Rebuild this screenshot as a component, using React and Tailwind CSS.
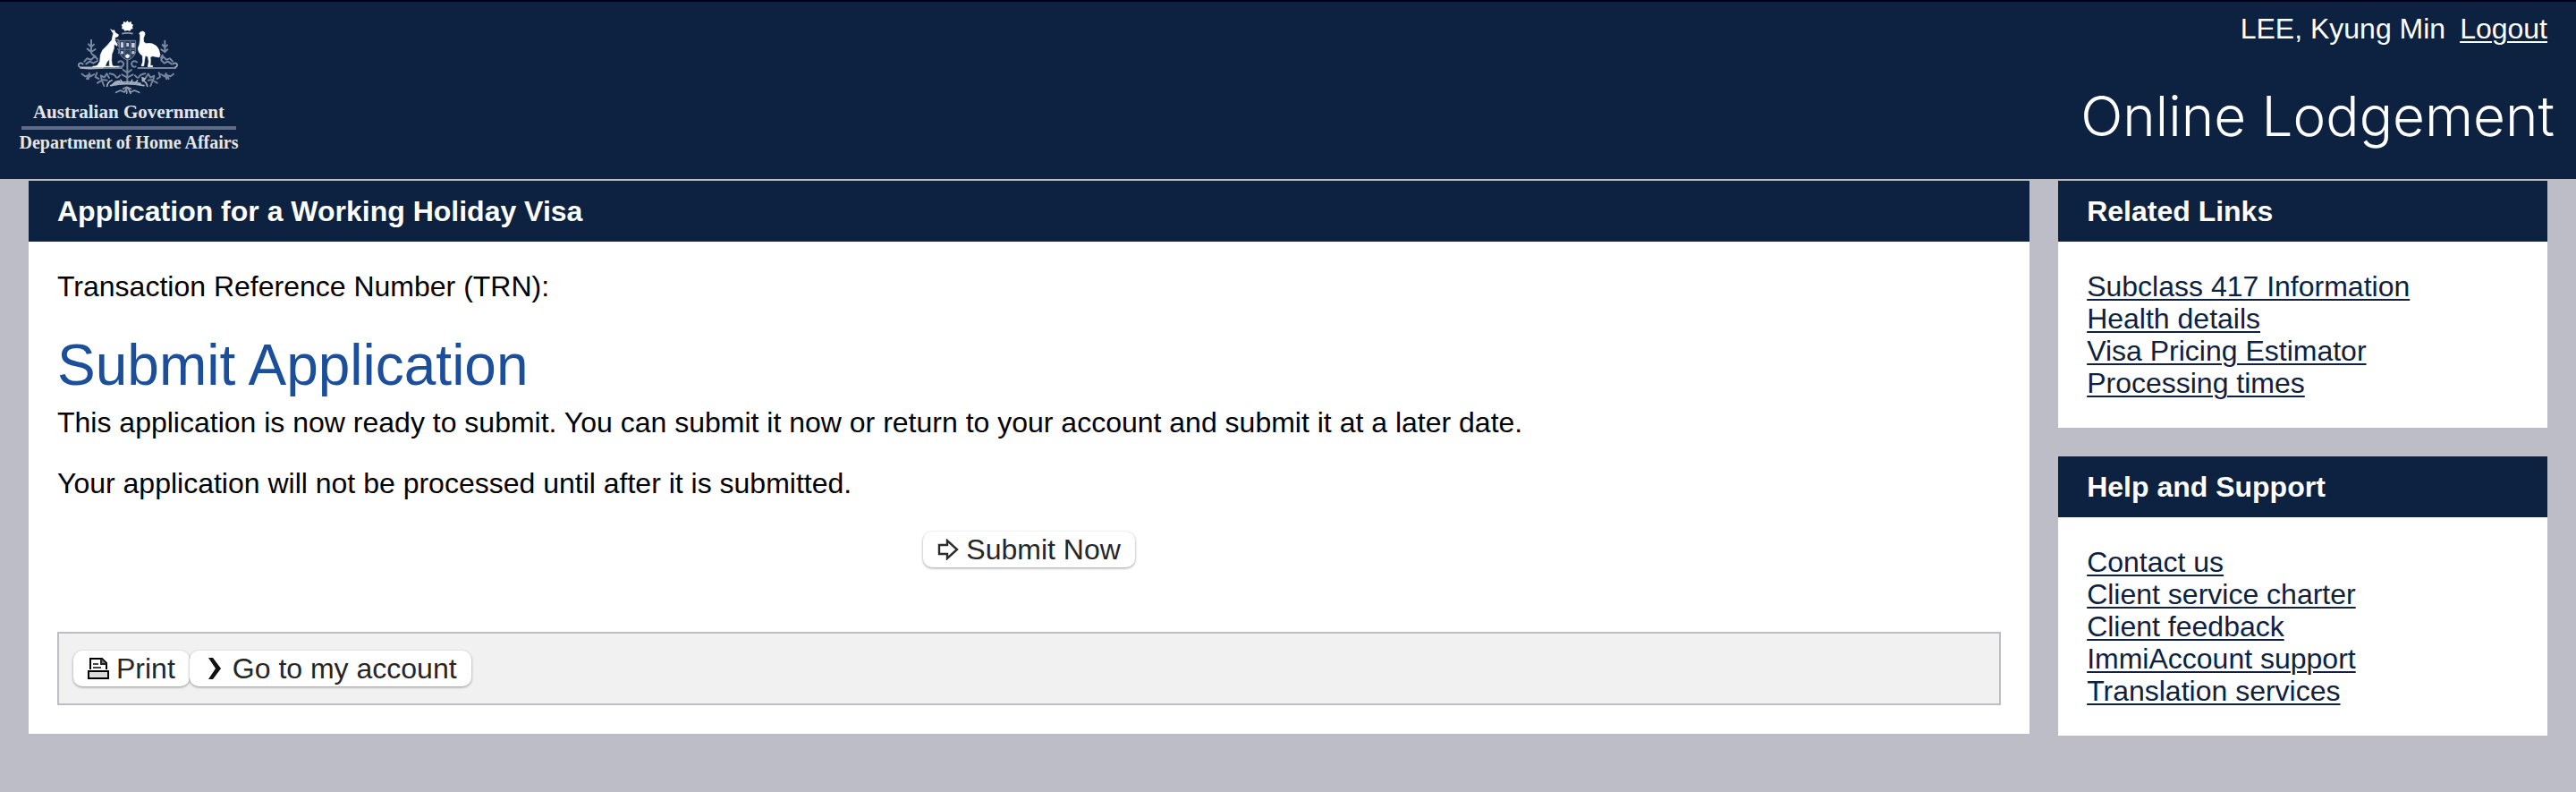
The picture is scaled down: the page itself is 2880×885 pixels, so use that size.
import React from "react";

const relatedLinks = [
  "Subclass 417 Information",
  "Health details",
  "Visa Pricing Estimator",
  "Processing times",
];

const supportLinks = [
  "Contact us",
  "Client service charter",
  "Client feedback",
  "ImmiAccount support",
  "Translation services",
];

const CoatOfArms = () => (
  <svg viewBox="0 0 390 285" className="w-[130px] h-[95px]" fill="none" aria-hidden="true">
    {/* star and wreath */}
    <path
      d="M190 27l5 6 8-3 1 8 6 3-3 6 2 7-7 2-3 6-9-2-9 2-3-6-7-2 2-7-3-6 6-3 1-8 8 3z"
      fill="#fff"
    />
    <path d="M172 71q18-5 37 0" stroke="#8f99ad" strokeWidth="5" />
    {/* shield */}
    <path
      d="M163 94h55v38q-4 20-27 28q-24-8-28-28z"
      fill="#2c3f5c"
      stroke="#76829a"
      strokeWidth="3"
    />
    <path d="M182 94v60M200 94v60M163 124h55" stroke="#5c6a85" strokeWidth="3" />
    <g fill="#c8cedb">
      <path d="M168 100h9v18h-9zM187 102h8v12h-8zM204 102h11v16h-11z" />
      <path d="M168 130h9v9h-9zM205 130h9v9h-9z" />
      <path d="M184 143l7-4 7 4-2 8-6 3-6-4z" fill="#fff" />
    </g>
    {/* kangaroo */}
    <path
      d="M134 56l7 5 5-2 4 9 10 6-1 6-10 3 0 11 8 14-2 4-9-7-1 16-7 19-1 20 2 17 9 6h-12l-6-6 0-20-8 8-6 14-8 8-44 2-28-2-3-4 42 0 14-5 9-14 2-22 7-16 17-17 14-17 5-22z"
      fill="#fff"
      stroke="#fff"
      strokeWidth="2"
    />
    {/* emu */}
    <path
      d="M230 70q4-7 12-7q8 2 7 10l-5 13 1 13 8 5q20-4 34 8q10 9 13 30l-3 8-22-4-8 3 1 12-1 17h8v4h-16l3-18-3-16-9-3-3 20-2 14h-8l5-14-1-20q-14-9-15-25l5-14 2-16 0-15z"
      fill="#fff"
      stroke="#fff"
      strokeWidth="2"
    />
    {/* wattle on both sides */}
    <g stroke="#7b88a1" strokeWidth="6" strokeLinecap="round" strokeLinejoin="round">
      <path d="M69 92v44M60 106l9 10 9-9M56 122l13 10 14-9M72 140l12 8" />
      <path d="M316 95v38M308 108l8 9 8-8M304 124l12 8 9-8M308 143l-5 9" />
      <path d="M46 164l9-10 14 4 11-10 10 8M52 172l12-8 12 6 14-8" />
      <path d="M342 164l-9-10-12 4-11-10-6 10M338 172l-12-8-12 6-10-10" />
      <path d="M154 92q10-4 4 9q9 5 2 12M158 122q8 6 2 14" strokeWidth="4" />
    </g>
    {/* base scroll */}
    <g stroke="#98a2b5" strokeWidth="5" strokeLinecap="round" strokeLinejoin="round">
      <path d="M34 184q-9-2-7-11q7-8 14 0M32 186h140" />
      <path d="M350 184q9-2 7-11q-7-8-14 0M352 186H226" />
      <path d="M75 181h88" stroke="#fff" strokeWidth="4" />
    </g>
    {/* foliage under the shield */}
    <g stroke="#76839c" strokeWidth="6" strokeLinecap="round" strokeLinejoin="round">
      <path d="M160 166q12-8 18 5q-2 14-14 10M222 166q-14-8-18 5q2 14 14 10" />
      <path d="M190 160v78M176 192l14 10 14-10M172 208l18 10 19-10" />
      <path d="M38 206l10 8 12-4-6 12M62 204l5 10 12-7M62 214l-3 9M88 202l-5 14 11 6" />
      <path d="M345 206l-10 8-12-4 6 12M320 204l-5 10-12-7M319 214l3 9M296 202l4 14-10 6" />
      <path d="M90 236l15-9-4-16 12 6 8-12 8 14M112 246l-6-15M106 225l16 2" />
      <path d="M290 236l-14-8 4-16-12 6-8-12-9 14M268 246l6-15M276 225l-16 2" />
      <path d="M131 205q16 2 20 10t14-4M250 205q-16 2-20 10t-14-4" />
    </g>
    <g stroke="#a7b0c1" strokeWidth="5" strokeLinecap="round" strokeLinejoin="round">
      <path d="M122 247q2-15 16-20M138 244q12-14 26-14M146 238q45-10 88 0" />
      <path d="M134 245q54-12 112 0M257 247q-2-15-16-20" />
      <path d="M150 232l8 8M168 226l6 10M206 226l-4 10M224 228l-7 8" />
      <path d="M240 218l10 4-8 8z" fill="#a7b0c1" />
    </g>
    <g stroke="#8f9aaf" strokeWidth="5" strokeLinecap="round" strokeLinejoin="round">
      <path d="M152 268l15-7 13 6 10-16 11 16 13-6 16 7M176 256l12-6 14 6M188 262v9M197 264l4 7" />
    </g>
  </svg>
);

const SubmitIcon = () => (
  <svg viewBox="0 0 24 24" className="w-6 h-6" aria-hidden="true">
    <path
      d="M2 7h9V2l11 10-11 10v-5H2z"
      fill="#fff"
      stroke="#2b2b2b"
      strokeWidth="2.4"
    />
  </svg>
);

const PrintIcon = () => (
  <svg viewBox="0 0 24 24" className="w-6 h-6" aria-hidden="true">
    <path d="M3 13V1h13l5 5v7" fill="#fff" stroke="#000" strokeWidth="2" />
    <path d="M15 1v6h6" fill="#777" stroke="#222" strokeWidth="2" />
    <path d="M6 7h6M6 11h9" stroke="#444" strokeWidth="2" />
    <path d="M1 15h22v8H1z" fill="#dcdcdc" stroke="#000" strokeWidth="2" />
  </svg>
);

const ArrowIcon = () => (
  <svg viewBox="0 0 24 24" className="w-6 h-6" aria-hidden="true">
    <path d="M5 0h5l9 12-9 12H5l8-12z" fill="#111" />
  </svg>
);

const ActionButton = ({ icon, children }) => (
  <button
    type="button"
    className="flex h-10 items-center gap-2 rounded-[10px] bg-white px-4 text-[32px] leading-9 text-[#262626] shadow-[0_1px_3px_rgba(0,0,0,0.4)]"
  >
    {icon}
    {children}
  </button>
);

const PanelTitle = ({ children }) => (
  <h2 className="bg-[#0d2240] px-8 py-4 text-[32px] leading-9 font-bold text-white">
    {children}
  </h2>
);

const LinkPanel = ({ title, links }) => (
  <section className="bg-white">
    <PanelTitle>{title}</PanelTitle>
    <ul className="p-8">
      {links.map((link) => (
        <li key={link}>
          <a href="#" className="text-[#0d2240] underline decoration-2 underline-offset-3">
            {link}
          </a>
        </li>
      ))}
    </ul>
  </section>
);

const App = () => {
  return (
    <div className="min-h-screen bg-[#bdbdc7] font-['Liberation_Sans',Arial,sans-serif] text-[32px] leading-9 text-black">
      <header className="flex justify-between border-t-2 border-[#00001a] bg-[#0d2240] pb-[29px] text-white">
        <div className="ml-6 flex w-60 flex-col items-center pt-3 font-['Liberation_Serif',serif] text-xl leading-6 font-bold whitespace-nowrap text-[#e3e6ec]">
          <CoatOfArms />
          <p className="mt-1 text-[21px] leading-6">Australian Government</p>
          <hr className="mt-1 w-full border-t-4 border-[#5f6b86]" />
          <p className="mt-0.5">Department of Home Affairs</p>
        </div>
        <div className="flex flex-col items-end">
          <div className="flex gap-4 pt-3 pr-8">
            <span>LEE, Kyung Min</span>
            <a href="#" className="underline decoration-2 underline-offset-3">
              Logout
            </a>
          </div>
          <h1 className="pt-10 pr-6 font-[Inter,sans-serif] text-[62px] leading-20 font-light">
            Online Lodgement
          </h1>
        </div>
      </header>

      <div className="grid grid-cols-[45fr_11fr] items-start gap-8 px-8 pt-0.5">
        <main className="bg-white">
          <PanelTitle>Application for a Working Holiday Visa</PanelTitle>
          <div className="p-8">
            <p>Transaction Reference Number (TRN):</p>
            <h1 className="mt-8 text-[64px] leading-[76px] text-[#1b4f9c]">Submit Application</h1>
            <p className="mt-2">
              This application is now ready to submit. You can submit it now or return to your
              account and submit it at a later date.
            </p>
            <p className="mt-8">Your application will not be processed until after it is submitted.</p>
            <div className="mt-9 flex justify-center">
              <ActionButton icon={<SubmitIcon />}>Submit Now</ActionButton>
            </div>
            <div className="mt-18 flex border-2 border-[#bdbdc7] bg-[#f1f1f1] px-4 py-[19px]">
              <ActionButton icon={<PrintIcon />}>Print</ActionButton>
              <ActionButton icon={<ArrowIcon />}>Go to my account</ActionButton>
            </div>
          </div>
        </main>

        <aside className="flex flex-col gap-8">
          <LinkPanel title="Related Links" links={relatedLinks} />
          <LinkPanel title="Help and Support" links={supportLinks} />
        </aside>
      </div>
    </div>
  );
};

export default App;
